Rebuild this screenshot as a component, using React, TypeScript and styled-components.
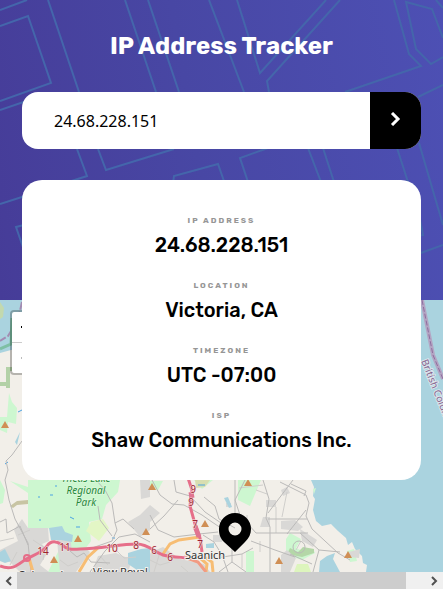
import React from "react";
import styled, { createGlobalStyle } from "styled-components";

const GlobalStyle = createGlobalStyle`
  *, *::before, *::after { box-sizing: border-box; }
  body { margin: 0; font-family: Rubik, Roboto, "Liberation Sans", sans-serif; color: #000; }
`;

const Page = styled.div`
  display: flex;
  flex-direction: column;
  height: 100vh;
  min-height: 520px;
  overflow: hidden;
`;

const Hero = styled.header`
  position: relative;
  z-index: 1;
  flex: none;
  height: 300px;
  padding: 32px 22px 0;
  background: linear-gradient(80deg, #463c98 0%, #4847a4 45%, #4d50b4 100%);
`;

const HeroPattern = styled.svg`
  position: absolute;
  inset: 0;
  width: 100%;
  height: 100%;
  fill: none;
  stroke: #4466ab;
  stroke-width: 2;
`;

const HeroContent = styled.div`
  position: relative;
  display: flex;
  flex-direction: column;
  max-width: 720px;
  margin: 0 auto;
`;

const Title = styled.h1`
  margin: 0 0 32px;
  color: #fff;
  font-size: 24px;
  line-height: 28px;
  font-weight: 700;
  text-align: center;
`;

const SearchForm = styled.form`
  display: flex;
  height: 57px;
  margin-bottom: 31px;
  border-radius: 16px;
  overflow: hidden;
  background: #fff;
`;

const SearchInput = styled.input`
  flex: 1;
  min-width: 0;
  padding: 0 32px;
  border: 0;
  outline: 0;
  background: transparent;
  color: #000;
  font-family: "Noto Sans", sans-serif;
  font-size: 16px;
`;

const SearchButton = styled.button`
  display: grid;
  place-items: center;
  width: 51px;
  padding: 0 0 4px;
  border: 0;
  background: #000;
  cursor: pointer;
`;

const Details = styled.dl`
  display: flex;
  flex-direction: column;
  gap: 23px;
  margin: 0;
  padding: 35px 16px 28px;
  border-radius: 20px;
  background: #fff;
  text-align: center;
`;

const Detail = styled.div`
  display: flex;
  flex-direction: column;
  gap: 6px;
`;

const DetailLabel = styled.dt`
  color: #969696;
  font-size: 8px;
  line-height: 12px;
  font-weight: 700;
  letter-spacing: 2px;
  text-transform: uppercase;
`;

const DetailValue = styled.dd`
  margin: 0;
  font-size: 20px;
  line-height: 24px;
  font-weight: 500;
`;

const MapPane = styled.main`
  position: relative;
  flex: 1;
  min-height: 0;
  overflow: hidden;
  background: #aad3df;
`;

const MapDrawing = styled.svg`
  display: block;
  width: 100%;
  height: 100%;
  font-family: "Noto Sans", sans-serif;
`;

const ZoomControl = styled.div`
  position: absolute;
  top: 10px;
  left: 10px;
  display: flex;
  flex-direction: column;
  border: 2px solid rgba(0, 0, 0, 0.25);
  border-radius: 4px;
  background: #fff;
  background-clip: padding-box;
`;

const ZoomButton = styled.button`
  display: grid;
  place-items: center;
  width: 30px;
  height: 30px;
  padding: 0;
  border: 0;
  background: transparent;
  color: #000;

  &:first-child {
    height: 31px;
    border-bottom: 1px solid #ccc;
  }
  &:disabled { color: #bbb; }
`;

const ScrollBar = styled.div`
  display: flex;
  flex: none;
  height: 17px;
  background: #f0f0f0;
`;

const ScrollArrow = styled.button`
  display: grid;
  place-items: center;
  width: 17px;
  padding: 0;
  border: 0;
  background: #f0f0f0;
`;

const ScrollTrack = styled.div`
  display: flex;
  flex: 1;
`;

const ScrollThumb = styled.div`
  width: 95%;
  background: #cdcdcd;
`;

const details = [
  { label: "IP Address", value: "24.68.228.151" },
  { label: "Location", value: "Victoria, CA" },
  { label: "Timezone", value: "UTC -07:00" },
  { label: "ISP", value: "Shaw Communications Inc." },
];

const patternPaths = [
  "M0 10 27 0",
  "M0 26 28 16 51 83 0 101",
  "M0 110 50 93",
  "M48 0 79 92",
  "M77 149 87 176 0 204",
  "M125 0 156 92",
  "M148 0 179 92",
  "M98 149 106 170 174 149",
  "M209 0 244 92",
  "M237 0 260 73 326 0",
  "M340 0 267 81 269 92",
  "M345 92 421 66 409 54 394 0",
  "M443 38 432 9 406 2 416 49 431 64 443 57",
  "M436 0 443 8",
  "M418 97 443 85",
  "M173 184 174 176 218 164 225 184",
  "M24 250 16 227 24 225",
  "M268 148 240 158 248 182",
  "M308 148 321 182",
  "M323 148 334 182",
  "M397 148 408 182",
  "M413 184 423 235 418 236",
  "M419 143 443 225",
  "M418 254 443 245",
];

const parks = [
  "M28 480H120L118 492 106 505 102 519 89 522 91 541 82 553 68 548 74 572H48L58 552 66 540 48 528H28Z",
  "M9 393 12 402 17 408 16 424 8 422 7 433 0 430V417H7Z",
  "M10 481 28 487 28 493Z",
  "M0 480 5 490 3 503 0 504Z",
  "M150 481H163L158 490H150Z",
  "M238 480H261L250 506 238 500Z",
  "M194 480H213L202 489Z",
  "M286 539 290 533 301 539 296 548 307 553 313 549 315 553 302 560 286 555Z",
  "M246 551H254V572H246Z",
  "M347 551 354 549 357 561 350 562Z",
  "M313 489 316 488 314 494Z",
];

const suburbs = [
  "M28 528H48L49 541 42 544 48 552 40 565 49 572H20L10 562 0 560V550L18 541 14 530 22 519Z",
  "M57 540 70 537 72 550 85 548 90 552 76 572H60Z",
  "M140 480H150V497L141 499Z",
  "M128 522 140 515 150 505 160 513 150 522 150 530 140 537Z",
  "M151 552 163 547 180 559 204 564 210 572H142Z",
  "M213 535H222V542H213Z",
  "M266 500H276V507H266Z",
  "M263 517 270 517 270 527 260 527Z",
  "M281 521 295 520 303 527 298 531 281 529Z",
  "M300 529 317 540 313 547 302 541Z",
  "M287 550 296 558 290 572H281V555Z",
  "M98 556 116 553 132 560 128 572H92Z",
  "M281 490 287 487 290 493 283 496Z",
  "M226 503 231 503 231 507 226 507Z",
  "M349 552 360 549 359 558 349 557Z",
];

const lakes = [
  "M49 528 62 526 65 532 73 535 72 542 61 540 51 540Z",
  "M0 552 5 549 11 561 5 563 0 561Z",
  "M128 553 141 549 150 548V572H140L128 564Z",
  "M224 498 228 497 232 507 229 508Z",
  "M206 544 214 543 214 548 206 548Z",
  "M20 432 15 442 17 445Z",
];

const minorRoads = [
  "M22 441 12 455 6 461 8 470 5 480 9 500 15 519 28 543 31 572",
  "M0 522 6 519 7 533 20 526 28 545",
  "M96 480 105 490 112 503 115 523 117 530 112 541 92 548",
  "M112 536 100 520 98 506",
  "M90 572 105 551 119 537 135 534 150 542",
  "M115 523 123 519 134 529",
  "M70 551 77 557 84 553 91 562 110 563",
  "M152 480 160 495 172 504 184 505 202 515 212 522 224 530",
  "M150 529 164 516 178 500",
  "M150 515 158 530 174 537 199 534 218 532",
  "M174 480 176 492 190 496",
  "M204 497 215 506 219 519 235 528",
  "M235 480V513",
  "M245 480 235 500 240 515 256 533H308",
  "M190 496 205 512 221 523",
  "M263 480 269 499 266 518 270 527V572",
  "M293 480 268 513",
  "M268 519H307",
  "M251 541 275 550 295 557",
  "M203 535 214 542 222 555 228 572",
  "M203 560 242 554 253 548",
  "M232 545V562L219 572",
  "M232 562 246 572",
  "M280 482 306 495 309 503 306 516 312 529 338 553 350 560",
  "M306 510 287 534",
  "M291 484 306 491 304 496",
  "M300 533 319 550 340 552",
  "M319 550 313 572",
  "M290 554 312 564",
];

const minorStreets = [
  "M18 535 30 530M0 541 14 538M17 552 10 565M33 540 45 548 43 560",
  "M60 560 68 566 78 562M100 556 108 565M116 550 124 558 136 557",
  "M150 560 160 565 170 562M181 566 188 572M160 552 154 572",
  "M239 488 263 485M287 492 282 517",
  "M256 490 267 494M247 515V533M276 507V533",
  "M260 541V552M242 554V568M301 541 296 550",
];

const peaks = [[5, 424], [78, 538], [54, 559], [146, 531], [152, 486], [205, 523], [248, 482], [348, 554], [279, 560]];

const routeNumbers: [string, number, number][] = [
  ["14", 43, 555], ["11", 65, 551], ["10", 112, 552], ["8", 136, 549], ["6", 154, 554],
  ["6", 170, 561], ["7", 195, 528], ["7", 200, 548], ["9", 193, 493], ["9", 191, 506],
];

function MapScene() {
  return (
    <MapDrawing viewBox="0 300 443 272" preserveAspectRatio="xMidYMin slice" role="img" aria-label="Map of Saanich and Victoria">
      <rect y="300" width="443" height="272" fill="#aad3df" />
      <path d="M0 353 11 350 30 349 60 355 300 400 310 470 311 480 314 487 313 496 315 499 313 510 316 521 322 526 331 524 338 531 346 538 348 545 352 542 355 549 362 556 363 563 367 565 366 572H340L333 559 335 553 327 556 320 561 319 572H0Z" fill="#f2efe9" />
      <path d="M0 302 4 308 3 317 0 319Z" fill="#c3d9ae" />
      <path d="M22 302 18 320 8 336 0 341" fill="none" stroke="#a38bb2" strokeWidth="2" strokeDasharray="8 2" />
      <path d="M0 349 11 344 12 318" fill="none" stroke="#7ebfa4" strokeWidth="3" />
      <path d="M0 384H8V369H13M8 382V388" fill="none" stroke="#b3d1a7" strokeWidth="4" />
      <g fill="#cdf7d0">{parks.map((d) => <path key={d} d={d} />)}</g>
      <path d="M91 522 103 519 109 528 99 541 86 531Z" fill="#e3f6c5" />
      <path d="M297 564 308 564 311 572H294Z" fill="#ddf5bd" />
      <path d="M287 554 290 548 298 552 303 547 314 549 314 553 302 557Z" fill="#b4d7a8" />
      <path d="M10 506 17 501 28 500 28 504 17 505 13 508Z" fill="#c8c4a3" />
      <path d="M195 480H210L205 487 196 488Z" fill="#d8deb0" />
      <g fill="#d9d8d6">{suburbs.map((d) => <path key={d} d={d} />)}</g>
      <g fill="#aad3df">{lakes.map((d) => <path key={d} d={d} />)}</g>
      <path d="M55 486h2M38 497h2M50 495h3M70 517l4 2M76 527h4M39 520h2M198 485h7M112 538h3M5 464l3-2M18 412l4-2" stroke="#4ba3e3" strokeWidth="1" />
      <g fill="none" stroke="#cfcecb" strokeWidth="1">{minorStreets.map((d) => <path key={d} d={d} />)}</g>
      <g fill="none" stroke="#bbbab9" strokeWidth="1">{minorRoads.map((d) => <path key={d} d={d} />)}</g>
      <circle cx="299" cy="547" r="6" fill="none" stroke="#bab9b8" />
      <g fill="none" stroke="#f7bd73" strokeWidth="3">
        <path d="M29 558 33 572M79 572 88 557 99 547M163 554 170 544 179 540 200 537M203 556 212 562 213 572M200 558 207 564 206 572" />
      </g>
      <path d="M184 557 198 562 206 572" fill="none" stroke="#f29b83" strokeWidth="3" />
      <g fill="none" stroke="#e66e89" strokeWidth="3">
        <path d="M0 566C14 572 20 562 28 558S43 552 47 546 57 541 62 545 70 550 80 549C100 549 120 544 137 544 148 544 154 552 163 555S176 556 186 558" />
        <path d="M188 478 192 490 190 506 195 524 200 538 202 552" />
      </g>
      <path d="M195 526 199 537M191 492 192 498" stroke="#e07491" strokeWidth="5" />
      <circle cx="27" cy="558" r="3" fill="none" stroke="#e66e89" strokeWidth="2" />
      <g fill="#d08f55">{peaks.map(([x, y]) => <path key={`${x}-${y}`} d={`M${x} ${y - 3}l4 7h-8Z`} />)}</g>
      <g fill="#9c2430" stroke="#f5e5e3" strokeWidth="1" paintOrder="stroke" fontSize="10" textAnchor="middle">
        {routeNumbers.map(([label, x, y]) => <text key={`${x}-${y}`} x={x} y={y}>{label}</text>)}
      </g>
      <g fill="#23883a" stroke="#e4f8e0" strokeWidth="1" paintOrder="stroke" fontSize="10" fontStyle="italic" textAnchor="middle">
        <text x="86" y="482">Thetis Lake</text>
        <text x="86" y="494">Regional</text>
        <text x="86" y="506">Park</text>
      </g>
      <g fill="#333" stroke="#f3f1ee" strokeWidth="2" paintOrder="stroke" fontSize="11">
        <text x="185" y="559">Saanich</text>
        <text x="93" y="576">View Royal</text>
        <text x="18" y="579">Colwood</text>
      </g>
      <path d="M422 300 433 355 443 379" fill="none" stroke="#b3a5c3" strokeWidth="4" />
      <path d="M422 300 433 355 443 379" fill="none" stroke="#8f6e9f" strokeWidth="1" strokeDasharray="5 2" />
      <text transform="translate(421 361) rotate(68)" fill="#85648f" stroke="#dce5ec" strokeWidth="2" paintOrder="stroke" fontSize="10">British Columbia</text>
      <path fillRule="evenodd" d="M235 552 224 542C219 537 219 532 219 529a16 16 0 0 1 32 0c0 5-2 9-6 13ZM235 522.5a6.5 6.5 0 1 0 0 13 6.5 6.5 0 0 0 0-13Z" />
    </MapDrawing>
  );
}

export default function App() {
  return (
    <>
      <GlobalStyle />
      <Page>
        <Hero>
          <HeroPattern viewBox="0 0 443 300" preserveAspectRatio="xMidYMid slice" aria-hidden="true">
            {patternPaths.map((d) => <path key={d} d={d} />)}
          </HeroPattern>
          <HeroContent>
            <Title>IP Address Tracker</Title>
            <SearchForm onSubmit={(e) => e.preventDefault()}>
              <SearchInput aria-label="IP address" defaultValue="24.68.228.151" />
              <SearchButton aria-label="Search">
                <svg width="11" height="14" viewBox="0 0 11 14" fill="none" stroke="#fff" strokeWidth="3"><path d="m2 1 6 6-6 6" /></svg>
              </SearchButton>
            </SearchForm>
            <Details>
              {details.map(({ label, value }) => (
                <Detail key={label}>
                  <DetailLabel>{label}</DetailLabel>
                  <DetailValue>{value}</DetailValue>
                </Detail>
              ))}
            </Details>
          </HeroContent>
        </Hero>
        <MapPane>
          <MapScene />
          <ZoomControl>
            <ZoomButton aria-label="Zoom in">
              <svg width="12" height="12" viewBox="0 0 12 12" stroke="currentColor" strokeWidth="2"><path d="M0 6h12M6 0v12" /></svg>
            </ZoomButton>
            <ZoomButton aria-label="Zoom out" disabled>
              <svg width="12" height="12" viewBox="0 0 12 12" stroke="currentColor" strokeWidth="2"><path d="M0 6h12" /></svg>
            </ZoomButton>
          </ZoomControl>
        </MapPane>
        <ScrollBar>
          <ScrollArrow aria-label="Scroll left">
            <svg width="9" height="10" viewBox="0 0 9 10" fill="none" stroke="#505050" strokeWidth="2"><path d="M7 1 3 5l4 4" /></svg>
          </ScrollArrow>
          <ScrollTrack><ScrollThumb /></ScrollTrack>
          <ScrollArrow aria-label="Scroll right">
            <svg width="9" height="10" viewBox="0 0 9 10" fill="none" stroke="#505050" strokeWidth="2"><path d="m2 1 4 4-4 4" /></svg>
          </ScrollArrow>
        </ScrollBar>
      </Page>
    </>
  );
}
